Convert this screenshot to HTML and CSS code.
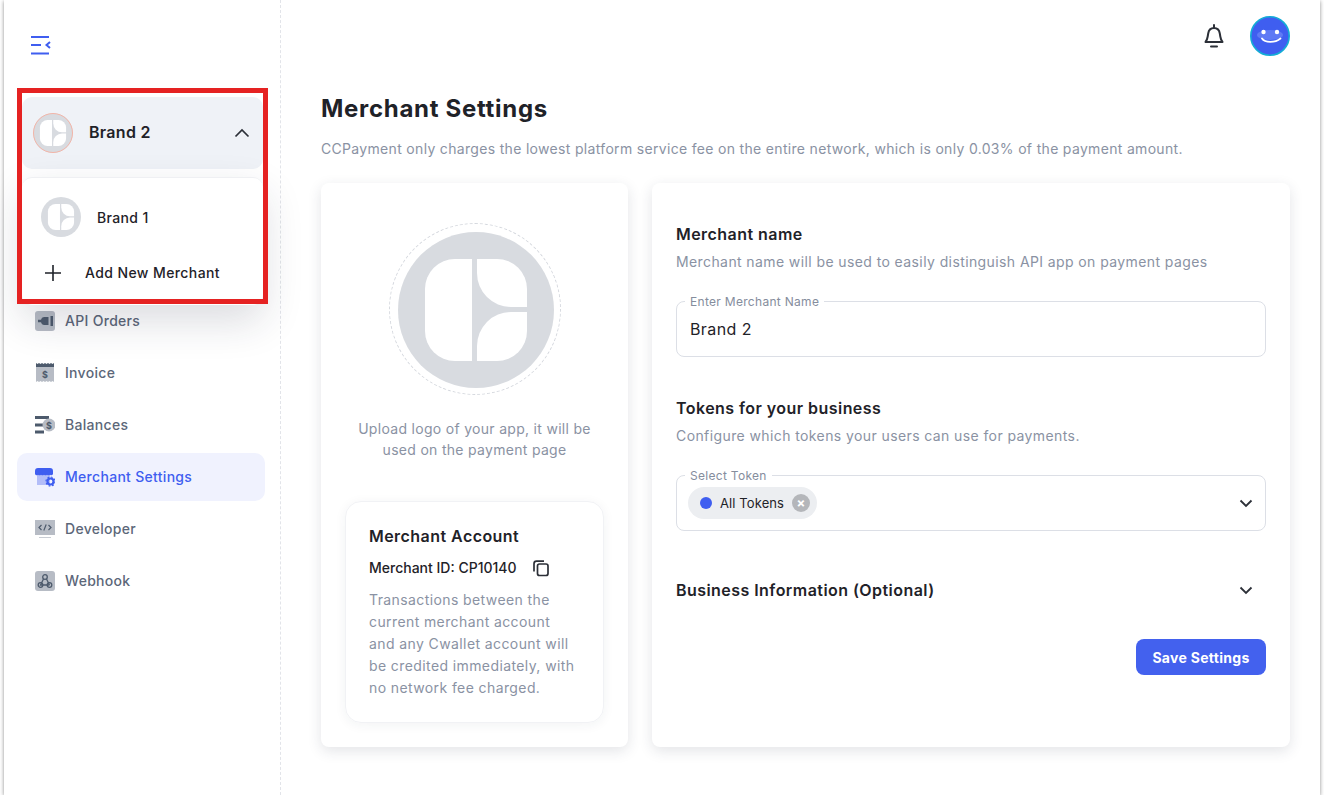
FILE: index.html
```html
<!DOCTYPE html>
<html>
    <head>
        <title>Merchant Settings</title>
        <link rel="stylesheet" href="styles.css">
    </head>
    <body>
        <svg class="defs" width="0" height="0">
            <symbol id="logo" viewBox="0 0 156 156">
                <circle cx="78" cy="78" r="78" fill="#d8dbe0"/>
                <path fill="#fff" d="M74 27H57A30 30 0 0 0 27 57V99A30 30 0 0 0 57 129H74Z"/>
                <path fill="#fff" d="M79 27H99A30 30 0 0 1 129 57V75H113A34 34 0 0 1 79 41Z"/>
                <path fill="#fff" d="M79 129H99A30 30 0 0 0 129 99V80H113A34 34 0 0 0 79 114Z"/>
            </symbol>
        </svg>
        <div class="window">
            <aside class="sidebar">
                <button class="menu-toggle">
                    <svg width="20" height="20" viewBox="0 0 20 20" fill="none" stroke="#3f5ef0" stroke-width="2">
                        <path d="M0 2H18M0 10H10M0 18.500H18"/>
                        <path d="M19 7L15.500 10L19 13"/>
                    </svg>
                </button>

                <div class="merchant-switch">
                    <div class="merchant-current">
                        <svg class="merchant-logo ringed" width="40" height="40"><use href="#logo"/></svg>
                        <span class="merchant-current-name">Brand 2</span>
                        <svg width="16" height="10" viewBox="0 0 16 10" fill="none" stroke="#2c3038" stroke-width="1.700"><path d="M1.500 8.500L8 2L14.500 8.500"/></svg>
                    </div>
                    <!-- open dropdown sits over the nav -->
                    <div class="merchant-menu">
                        <div class="merchant-option">
                            <svg width="40" height="40"><use href="#logo"/></svg>
                            <span>Brand 1</span>
                        </div>
                        <div class="merchant-add">
                            <svg width="16" height="16" viewBox="0 0 16 16" stroke="#1f2228" stroke-width="1.600"><path d="M8 0V16M0 8H16"/></svg>
                            <span>Add New Merchant</span>
                        </div>
                    </div>
                    <div class="highlight-box"></div>
                </div>

                <nav class="nav">
                    <a class="nav-item">
                        <svg width="20" height="20" viewBox="0 0 20 20">
                            <rect width="20" height="20" rx="3" fill="#b7bcc5"/>
                            <path fill="#4d5a6c" d="M15.500 5H18V15H15.500zM13.500 6V14H9A3.500 3.500 0 0 1 6 11.200H3V8.800H6A3.500 3.500 0 0 1 9 6z"/>
                        </svg>
                        <span>API Orders</span>
                    </a>
                    <a class="nav-item">
                        <svg width="20" height="20" viewBox="0 0 20 20">
                            <path fill="#b7bcc5" d="M1 3h18v16l-1.500-1-1.500 1-1.500-1-1.500 1-1.500-1-1.500 1-1.500-1-1.500 1-1.500-1-1.500 1-1.500-1L1 19z"/>
                            <path fill="#4d5a6c" d="M1 0l1.500 1L4 0l1.500 1L7 0l1.500 1L10 0l1.500 1L13 0l1.500 1L16 0l1.500 1L19 0v4H1z"/>
                            <text x="10" y="14.500" class="icon-text">$</text>
                        </svg>
                        <span>Invoice</span>
                    </a>
                    <a class="nav-item">
                        <svg width="20" height="20" viewBox="0 0 20 20">
                            <path fill="#4d5a6c" d="M0 1h14v3H0zM0 8.500h8v3H0zM0 15.500h9v3H0z"/>
                            <circle cx="14" cy="10" r="6.500" fill="#b7bcc5"/>
                            <text x="14" y="13.500" class="icon-text">$</text>
                        </svg>
                        <span>Balances</span>
                    </a>
                    <a class="nav-item active">
                        <svg width="20" height="20" viewBox="0 0 20 20">
                            <path fill="#b3bdf8" d="M2 7h13v11H2z"/>
                            <path fill="#3f5ef0" d="M3 1h12a3 3 0 0 1 3 3v3a2 2 0 0 1-3 .8 2.500 2.500 0 0 1-3 0 2.500 2.500 0 0 1-3 0 2.500 2.500 0 0 1-3 0 2.500 2.500 0 0 1-3 0A2 2 0 0 1 0 7V4a3 3 0 0 1 3-3z"/>
                            <circle cx="15.500" cy="14.500" r="3" fill="none" stroke="#3f5ef0" stroke-width="2.200"/>
                            <circle cx="15.500" cy="14.500" r="4.500" fill="none" stroke="#3f5ef0" stroke-width="1.200" stroke-dasharray="1.800 1.700"/>
                        </svg>
                        <span>Merchant Settings</span>
                    </a>
                    <a class="nav-item">
                        <svg width="20" height="20" viewBox="0 0 20 20">
                            <rect y="1" width="20" height="15" fill="#b7bcc5"/>
                            <rect x="4" y="18" width="12" height="1" fill="#c9cdd4"/>
                            <path fill="none" stroke="#4d5a6c" stroke-width="1.200" d="M6.500 6L4 8.500L6.500 11M13.500 6L16 8.500L13.500 11M11.200 5.500L8.800 11.500"/>
                        </svg>
                        <span>Developer</span>
                    </a>
                    <a class="nav-item">
                        <svg width="20" height="20" viewBox="0 0 20 20">
                            <rect width="20" height="20" rx="3" fill="#b7bcc5"/>
                            <g fill="none" stroke="#4d5a6c" stroke-width="1.300">
                                <circle cx="10" cy="6" r="2.300"/>
                                <circle cx="5.500" cy="14" r="2.300"/>
                                <circle cx="14.500" cy="14" r="2.300"/>
                                <path d="M8.500 8L5.500 14H14.500M11.500 8L14.500 14"/>
                            </g>
                        </svg>
                        <span>Webhook</span>
                    </a>
                </nav>
            </aside>

            <main class="main">
                <header class="topbar">
                    <svg width="22" height="24" viewBox="0 0 22 24" fill="none" stroke="#2c3038" stroke-width="2">
                        <path d="M11 1V4M2.500 18H19.500C18.200 16.500 17.700 15 17.300 12.500L16.800 9.500C16.300 6.200 14 4 11 4S5.700 6.200 5.200 9.500L4.700 12.500C4.300 15 3.800 16.500 2.500 18ZM8 22.500H14" stroke-linecap="round" stroke-linejoin="round"/>
                    </svg>
                    <svg class="avatar" width="40" height="40" viewBox="0 0 40 40">
                        <circle cx="20" cy="20" r="19.200" fill="#3f5ef0" stroke="#14acd6" stroke-width="1.600"/>
                        <ellipse cx="20" cy="19" rx="13" ry="5" fill="#5f7af5"/>
                        <circle cx="13.500" cy="16" r="2.200" fill="#fff"/>
                        <circle cx="27" cy="16" r="2.200" fill="#fff"/>
                        <path d="M12 22.500C15 27 25 27 30.500 22.500" fill="none" stroke="#fff" stroke-width="1.800" stroke-linecap="round"/>
                    </svg>
                </header>

                <h1 class="page-title">Merchant Settings</h1>
                <p class="page-desc">CCPayment only charges the lowest platform service fee on the entire network, which is only 0.03% of the payment amount.</p>

                <div class="columns">
                    <section class="card logo-card">
                        <div class="logo-ring">
                            <svg width="156" height="156"><use href="#logo"/></svg>
                        </div>
                        <p class="logo-caption">Upload logo of your app, it will be used on the payment page</p>
                        <div class="account-card">
                            <h3 class="heading">Merchant Account</h3>
                            <div class="account-id">
                                <span>Merchant ID: CP10140</span>
                                <svg width="18" height="18" viewBox="0 0 18 18" fill="none" stroke="#2c3038" stroke-width="1.700">
                                    <rect x="5.500" y="5" width="10.500" height="11.500" rx="2"/>
                                    <path d="M12 2.200H4.500A2.500 2.500 0 0 0 2 4.700V12.500"/>
                                </svg>
                            </div>
                            <p class="muted">Transactions between the current merchant account and any Cwallet account will be credited immediately, with no network fee charged.</p>
                        </div>
                    </section>

                    <section class="card form-card">
                        <h3 class="heading">Merchant name</h3>
                        <p class="muted">Merchant name will be used to easily distinguish API app on payment pages</p>
                        <div class="field">
                            <label class="field-label">Enter Merchant Name</label>
                            <span class="field-value">Brand 2</span>
                        </div>

                        <h3 class="heading">Tokens for your business</h3>
                        <p class="muted">Configure which tokens your users can use for payments.</p>
                        <div class="field token-field">
                            <label class="field-label">Select Token</label>
                            <span class="chip">
                                <i class="chip-dot"></i>
                                All Tokens
                                <i class="chip-close">×</i>
                            </span>
                            <svg class="chevron" width="14" height="9" viewBox="0 0 14 9" fill="none" stroke="#2c3038" stroke-width="1.800"><path d="M1.500 1.500L7 7L12.500 1.500"/></svg>
                        </div>

                        <div class="collapse-row">
                            <h3 class="heading">Business Information (Optional)</h3>
                            <svg class="chevron" width="14" height="9" viewBox="0 0 14 9" fill="none" stroke="#2c3038" stroke-width="1.800"><path d="M1.500 1.500L7 7L12.500 1.500"/></svg>
                        </div>

                        <div class="button-container">
                            <button class="save-button">Save Settings</button>
                        </div>
                    </section>
                </div>
            </main>
        </div>
    </body>
</html>
```

FILE: styles.css
```css
* {
    box-sizing: border-box;
}

body {
    margin: 0;
    background-color: #fff;
    font-family: Inter, "Open Sans", sans-serif;
    color: #1f2228;
    overflow: hidden;
}

.defs {
    display: block;
}

h1, h3, p {
    margin: 0;
}

.window {
    display: flex;
    width: 1316px;
    height: 795px;
    margin-left: 4px;
    background-color: #fff;
    box-shadow: 0 1px 4px rgba(0, 0, 0, 0.45);
}

/* sidebar */
.sidebar {
    width: 277px;
    padding-left: 13px;
    border-right: 1px dashed #e2e4e9;
    flex-shrink: 0;
}

.menu-toggle {
    display: block;
    margin: 35px 0 0 14px;
    padding: 0;
    width: 20px;
    height: 20px;
    border: none;
    background: none;
}

.merchant-switch {
    position: relative;
    margin: 42px 0 0 5px;
    width: 241px;
}

.merchant-current {
    display: flex;
    align-items: center;
    height: 72px;
    padding: 0 13px 0 11px;
    background-color: #eff2f7;
    border-radius: 10px;
    font-size: 16px;
    font-weight: 600;
    letter-spacing: 0.3px;
}

.merchant-logo {
    flex-shrink: 0;
}

.ringed {
    border-radius: 50%;
    outline: 1px solid #f3b5a8;
    outline-offset: -1px;
}

.merchant-current-name {
    flex: 1;
    margin-left: 16px;
    padding-bottom: 2px;
}

.merchant-menu {
    position: absolute;
    top: 80px;
    left: 0;
    width: 241px;
    height: 128px;
    padding: 19px 19px 0;
    background-color: #fff;
    border-top: 1px solid #eff0f3;
    border-radius: 10px;
    box-shadow: 0 16px 40px rgba(30, 40, 60, 0.16);
    z-index: 2;
}

.merchant-option {
    display: flex;
    align-items: center;
    gap: 16px;
    font-size: 14px;
    font-weight: 500;
    letter-spacing: 0.35px;
}

.merchant-add {
    display: flex;
    align-items: center;
    gap: 24px;
    margin-top: 27px;
    padding-left: 4px;
    font-size: 14px;
    font-weight: 500;
    letter-spacing: 0.4px;
}

.highlight-box {
    position: absolute;
    top: -9px;
    left: -5px;
    width: 251px;
    height: 216px;
    border: 5px solid #e52222;
    z-index: 3;
}

.nav {
    display: flex;
    flex-direction: column;
    gap: 4px;
    margin-top: 128px;
    width: 248px;
}

.nav-item {
    display: flex;
    align-items: center;
    gap: 10px;
    height: 48px;
    padding-left: 18px;
    border-radius: 10px;
    font-size: 14px;
    font-weight: 500;
    letter-spacing: 0.3px;
    color: #5c6779;
}

.nav-item span {
    padding-bottom: 1px;
}

.nav-item svg {
    flex-shrink: 0;
}

.nav-item.active {
    background-color: #f0f2fe;
    color: #3f5ef0;
}

.icon-text {
    font-size: 9px;
    font-weight: 700;
    fill: #4d5a6c;
    text-anchor: middle;
}

/* main area */
.main {
    flex: 1;
    padding: 0 30px 0 40px;
}

.topbar {
    display: flex;
    justify-content: flex-end;
    align-items: center;
    gap: 25px;
    height: 40px;
    margin-top: 16px;
}

.page-title {
    margin-top: 37px;
    font-size: 24px;
    line-height: 32px;
    font-weight: 700;
    letter-spacing: 0.7px;
}

.page-desc {
    margin-top: 13px;
    font-size: 14px;
    line-height: 22px;
    letter-spacing: 0.32px;
    color: #8a92a3;
}

.columns {
    display: flex;
    gap: 24px;
    margin-top: 23px;
}

.card {
    height: 564px;
    background-color: #fff;
    border-radius: 8px;
    box-shadow: 0 4px 14px rgba(40, 50, 70, 0.13);
}

.logo-card {
    width: 307px;
    padding: 40px 24px 0;
}

.logo-ring {
    display: flex;
    align-items: center;
    justify-content: center;
    width: 172px;
    height: 172px;
    margin-left: 44px;
    padding: 2px 0 0 2px;
    border: 1px dashed #d5d8de;
    border-radius: 50%;
}

.logo-caption {
    margin: 23px 0 0;
    padding: 0 8px;
    text-align: center;
    font-size: 14px;
    line-height: 21px;
    letter-spacing: 0.3px;
    color: #8a92a3;
}

.account-card {
    margin-top: 41px;
    padding: 23px 23px;
    height: 222px;
    border: 1px solid #f1f2f5;
    border-radius: 16px;
    box-shadow: 0 2px 12px rgba(40, 50, 70, 0.06);
}

.heading {
    font-size: 16px;
    line-height: 22px;
    font-weight: 600;
    letter-spacing: 0.45px;
}

.account-id {
    display: flex;
    align-items: center;
    gap: 15px;
    margin-top: 10px;
    font-size: 14px;
    line-height: 22px;
    font-weight: 500;
}

.muted {
    font-size: 14px;
    line-height: 22px;
    letter-spacing: 0.4px;
    color: #8a92a3;
}

.account-id + .muted {
    margin-top: 10px;
}

.form-card {
    flex: 1;
    padding: 40px 24px 0;
}

.form-card .muted {
    margin-top: 6px;
}

.field {
    position: relative;
    display: flex;
    align-items: center;
    height: 56px;
    margin: 28px 0 40px;
    padding: 0 13px;
    border: 1px solid #dcdfe6;
    border-radius: 8px;
}

.token-field {
    margin-bottom: 48px;
}

.field-label {
    position: absolute;
    top: -8px;
    left: 8px;
    padding: 0 5px;
    background-color: #fff;
    font-size: 12px;
    line-height: 16px;
    letter-spacing: 0.3px;
    color: #858d9d;
}

.field-value {
    font-size: 16px;
    letter-spacing: 0.4px;
}

.chip {
    display: flex;
    align-items: center;
    height: 32px;
    margin-left: -2px;
    padding: 0 7px 0 12px;
    background-color: #eceef1;
    border-radius: 16px;
    font-size: 13px;
    letter-spacing: 0.1px;
}

.chip-dot {
    width: 12px;
    height: 12px;
    margin-right: 8px;
    background-color: #3f5ef0;
    border-radius: 50%;
}

.chip-close {
    display: flex;
    align-items: center;
    justify-content: center;
    width: 18px;
    height: 18px;
    margin-left: 8px;
    background-color: #b4b6ba;
    border-radius: 50%;
    color: #fff;
    font-style: normal;
    font-weight: 700;
    font-size: 13px;
}

.field .chevron {
    position: absolute;
    right: 12px;
    top: 23px;
}

.collapse-row {
    display: flex;
    align-items: center;
    justify-content: space-between;
    height: 22px;
    padding-right: 13px;
}

.button-container {
    display: flex;
    justify-content: flex-end;
    margin-top: 38px;
}

.save-button {
    width: 130px;
    height: 36px;
    border: none;
    border-radius: 8px;
    background-color: #4361ee;
    color: #fff;
    font-family: inherit;
    font-size: 14px;
    font-weight: 700;
    letter-spacing: 0.3px;
}
```
